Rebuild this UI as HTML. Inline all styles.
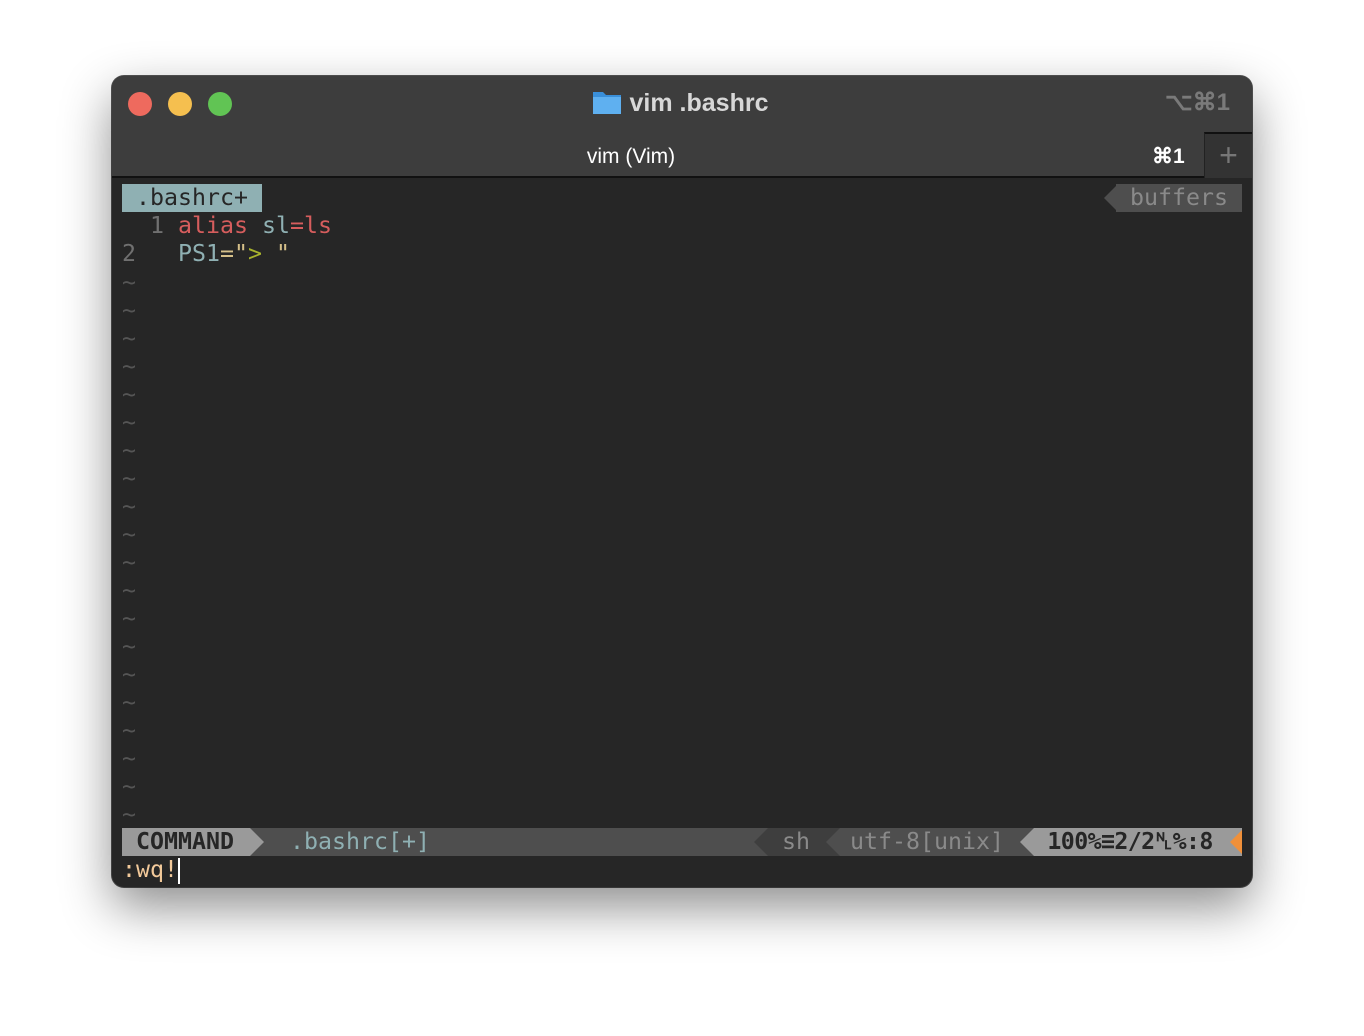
<!DOCTYPE html>
<html><head><meta charset="utf-8"><style>
*{margin:0;padding:0;box-sizing:border-box}
body{width:1364px;height:1036px;background:#fff;position:relative;overflow:hidden;font-family:"Liberation Sans",sans-serif}
.win{position:absolute;left:112px;top:76px;width:1140px;height:811px;border-radius:12px;background:#262626;overflow:hidden;box-shadow:0 20px 50px rgba(0,0,0,.45),0 0 0 1px #555;}
.tb{position:absolute;left:0;top:0;width:1140px;height:102px;background:#3d3d3d;border-bottom:2px solid #111}
.dot{position:absolute;top:16px;width:24px;height:24px;border-radius:50%}
.title{position:absolute;top:13px;left:0;width:1136px;text-align:center;color:#d8d8d8;font-weight:bold;font-size:25px}
.mono{font-family:"DejaVu Sans Mono","Liberation Mono",monospace;font-size:23.25px;line-height:28px;white-space:pre;position:absolute}
</style></head><body>
<div class="win">
 <div class="tb">
  <div class="dot" style="left:16px;background:#ee6a5e"></div>
  <div class="dot" style="left:56px;background:#f5bf4f"></div>
  <div class="dot" style="left:96px;background:#61c454"></div>
  <div class="title"><svg width="30" height="26" viewBox="0 0 30 26" style="vertical-align:-4px;margin-right:8px"><path d="M1 3h10l3 3h15v19H1z" fill="#3a8fd9"/><path d="M1 8h28v17H1z" fill="#5fb0f0"/></svg>vim .bashrc</div>
  <div style="position:absolute;right:22px;top:12px;color:#7a7a7a;font-weight:bold;font-size:24px">⌥⌘1</div>
  <div style="position:absolute;left:0;top:58px;width:1038px;height:46px;text-align:center;color:#fff;font-size:21px;line-height:46px">vim (Vim)</div>
  <div style="position:absolute;left:1040px;top:58px;width:40px;height:44px;color:#fff;font-size:21px;line-height:46px;font-weight:bold">⌘1</div>
  <div style="position:absolute;left:1092px;top:56px;width:48px;height:46px;background:#333;border-top:2px solid #111;border-left:1px solid #222;color:#777;font-size:32px;line-height:42px;text-align:center;font-weight:200">+</div>
 </div>
 <div class="mono" style="left:10px;top:108px;width:140px;height:28px;background:#8fb0b3;color:#262626"> .bashrc+ </div>
 <svg style="position:absolute;left:990px;top:108px" width="16" height="28"><path d="M16 0L2 14L16 28z" fill="#4e4e4e"/></svg>
 <div class="mono" style="left:1004px;top:108px;width:126px;height:28px;background:#4e4e4e;color:#8a8a8a"> buffers</div>
 <div class="mono" style="left:10px;top:136px"><span style="color:#707070">  1 </span><span style="color:#d65d5d">alias</span> <span style="color:#8fb0b3">sl</span><span style="color:#d65d5d">=ls</span></div>
 <div class="mono" style="left:10px;top:164px"><span style="color:#707070">2   </span><span style="color:#8fb0b3">PS1</span><span style="color:#d6c08a">=</span><span style="color:#d6c08a">"</span><span style="color:#a8b32d">&gt; </span><span style="color:#d6c08a">"</span></div>
 <div class="mono" style="left:10px;top:193px;color:#555;line-height:28px">~
~
~
~
~
~
~
~
~
~
~
~
~
~
~
~
~
~
~
~</div>
 <div style="position:absolute;left:10px;top:752px;width:1120px;height:28px;background:#4e4e4e"></div>
 <div class="mono" style="left:10px;top:752px;width:128px;height:28px;background:#9a9a9a;color:#262626;font-weight:bold"> COMMAND</div>
 <svg style="position:absolute;left:138px;top:752px" width="14" height="28"><path d="M0 0L14 14L0 28z" fill="#9a9a9a"/></svg>
 <div class="mono" style="left:178px;top:752px;color:#8fb0b3">.bashrc[+]</div>
 <svg style="position:absolute;left:640px;top:752px" width="16" height="28"><path d="M16 0L2 14L16 28z" fill="#3e3e3e"/></svg>
 <div class="mono" style="left:656px;top:752px;width:56px;height:28px;background:#3e3e3e;color:#8a8a8a"> sh</div>
 <svg style="position:absolute;left:712px;top:752px" width="16" height="28"><path d="M16 0L2 14L16 28z" fill="#4e4e4e"/><path d="M0 0h16L2 14L16 28H0z" fill="#3e3e3e"/></svg>
 <div class="mono" style="left:738px;top:752px;color:#8a8a8a">utf-8[unix]</div>
 <svg style="position:absolute;left:906px;top:752px" width="16" height="28"><path d="M16 0L2 14L16 28z" fill="#9a9a9a"/></svg>
 <div class="mono" style="left:922px;top:752px;width:194px;height:28px;background:#9a9a9a;color:#262626;font-weight:bold;letter-spacing:-0.6px"> 100%≡2/2␤%:8</div>
 <svg style="position:absolute;left:1116px;top:752px" width="14" height="28"><rect width="14" height="28" fill="#9a9a9a"/><path d="M14 2L2 14L14 26z" fill="#f0903a"/></svg>
 <div class="mono" style="left:10px;top:780px;color:#f2c99a">:wq!</div>
 <div style="position:absolute;left:66px;top:782px;width:2px;height:26px;background:#fff"></div>
</div>
</body></html>
